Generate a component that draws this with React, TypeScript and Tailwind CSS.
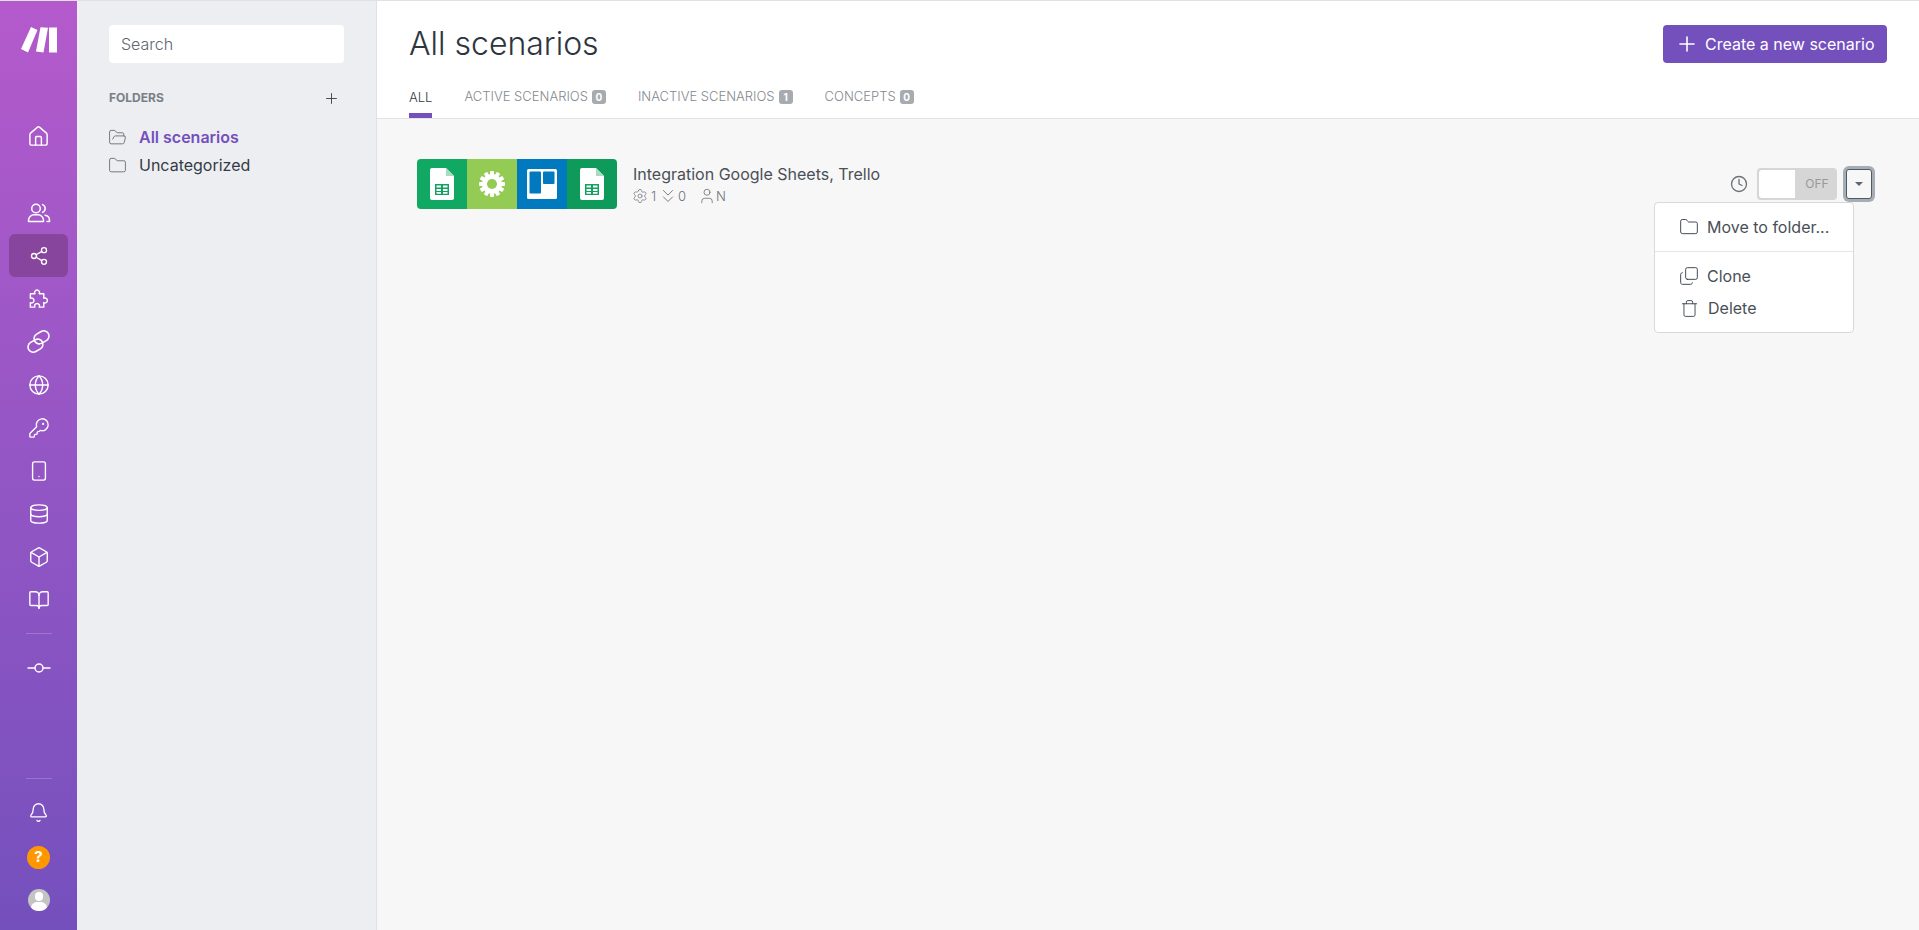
import {
  House,
  Share2,
  Globe,
  KeyRound,
  Smartphone,
  Database,
  Box,
  BookOpen,
  Bell,
  Plus,
  FolderOpen,
  Folder,
  Clock,
  Copy,
  Trash,
  Settings,
  ChevronsDown,
  User,
} from 'lucide-react';

function PeopleIcon() {
  return (
    <svg width="24" height="24" viewBox="0 0 24 24" fill="none" stroke="currentColor" strokeWidth="1.5" strokeLinecap="round" strokeLinejoin="round">
      <circle cx="9" cy="7.5" r="4.3" />
      <path d="M1.5 20.5v-1.2a5.5 5.5 0 0 1 5.5-5.5h4a5.5 5.5 0 0 1 5.5 5.5v1.2z" />
      <path d="M15.5 3.6a4.2 4.2 0 0 1 0 7.8" />
      <path d="M18 14.2a5.2 5.2 0 0 1 4.5 5v1.3h-2.5" />
    </svg>
  );
}

function PuzzleIcon() {
  return (
    <svg width="23" height="23" viewBox="0 0 24 24" fill="none" stroke="currentColor" strokeWidth="1.5" strokeLinejoin="round">
      <path d="M3.5 7h4.7a2.6 2.6 0 1 1 4.6 0h4.7v4.7a2.6 2.6 0 1 1 0 4.6V21h-4.7a2.6 2.6 0 1 0-4.6 0H3.5v-4.7a2.6 2.6 0 1 0 0-4.6z" />
    </svg>
  );
}

function ChainIcon() {
  return (
    <svg width="25" height="25" viewBox="0 0 24 24" fill="none" stroke="currentColor" strokeWidth="1.5">
      <g transform="rotate(-30 12 12)">
        <rect x="0" y="9" width="15" height="10" rx="5" />
        <rect x="9" y="5" width="15" height="10" rx="5" />
      </g>
    </svg>
  );
}

function CommitIcon() {
  return (
    <svg width="24" height="24" viewBox="0 0 24 24" fill="none" stroke="currentColor" strokeWidth="1.5">
      <circle cx="12" cy="12" r="4" />
      <path d="M0.5 12H8M16 12h7.5" />
    </svg>
  );
}

const navTop = [
  { icon: <PeopleIcon /> },
  { icon: <Share2 size={20} strokeWidth={1.6} />, active: true },
  { icon: <PuzzleIcon /> },
  { icon: <ChainIcon /> },
  { icon: <Globe size={22} strokeWidth={1.5} /> },
  { icon: <KeyRound size={22} strokeWidth={1.5} /> },
  { icon: <Smartphone size={22} strokeWidth={1.5} /> },
  { icon: <Database size={22} strokeWidth={1.5} /> },
  { icon: <Box size={22} strokeWidth={1.5} /> },
  { icon: <BookOpen size={22} strokeWidth={1.5} /> },
];

const tabs = [
  { label: 'Active scenarios', count: 0 },
  { label: 'Inactive scenarios', count: 1 },
  { label: 'Concepts', count: 0 },
];

function SheetIcon() {
  return (
    <svg width="24" height="32" viewBox="0 0 24 32">
      <path d="M2 0h14l8 8v22a2 2 0 0 1-2 2H2a2 2 0 0 1-2-2V2a2 2 0 0 1 2-2z" fill="#fff" />
      <path d="M16 0l8 8h-8z" fill="#a8dcc0" />
      <path d="M5 16h14v11H5z" fill="#12a25f" />
      <path d="M6.5 17.5h4.5v2h-4.5zM13 17.5h4.5v2H13zM6.5 21h4.5v2h-4.5zM13 21h4.5v2H13zM6.5 24h4.5v1.8h-4.5zM13 24h4.5v1.8H13z" fill="#fff" />
    </svg>
  );
}

function GearIcon() {
  const teeth = [0, 30, 60, 90, 120, 150];
  return (
    <svg width="26" height="26" viewBox="0 0 26 26">
      {teeth.map((a) => (
        <rect key={a} x="11" y="0" width="4" height="26" rx="0.8" fill="#fff" transform={`rotate(${a} 13 13)`} />
      ))}
      <circle cx="13" cy="13" r="10" fill="#fff" />
      <circle cx="13" cy="13" r="5" fill="#93cb55" />
    </svg>
  );
}

function TrelloIcon() {
  return (
    <svg width="30" height="30" viewBox="0 0 30 30">
      <rect width="30" height="30" rx="1.5" fill="#fff" />
      <rect x="2.5" y="2.5" width="11.5" height="22" rx="1" fill="#0079bf" />
      <rect x="16" y="2.5" width="11.5" height="12.5" rx="1" fill="#0079bf" />
    </svg>
  );
}

export default function App() {
  return (
    <div className="flex h-[930px] w-full overflow-hidden border-t border-[#dfe1e6] bg-[#f7f7f7] font-['Inter',sans-serif] text-[#333b45]">
      <aside className="flex w-[77px] shrink-0 flex-col items-center bg-gradient-to-b from-[#b45acc] to-[#7450bd] text-white">
        <svg className="mt-[26px]" width="36" height="26" viewBox="0 0 36 26" fill="#fff">
          <path d="M10 0l6.5 3L7 25.5 0 22z" />
          <path d="M19.5 0.2l7.5 .6L22.5 25.5l-7.5-1z" />
          <path d="M28 .5h8v25h-8z" />
        </svg>
        <div className="mt-[62px] flex h-[43px] items-center justify-center">
          <House size={23} strokeWidth={1.5} />
        </div>
        <nav className="mt-[33px] flex flex-col items-center">
          {navTop.map(({ icon, active }, i) => (
            <div
              key={i}
              className={`flex h-[43px] w-[59px] items-center justify-center rounded-md ${active ? 'bg-[#87459e]' : ''}`}
            >
              {icon}
            </div>
          ))}
        </nav>
        <div className="mt-3 h-px w-[26px] bg-white/20" />
        <div className="mt-3 flex h-[43px] items-center justify-center">
          <CommitIcon />
        </div>
        <div className="mt-auto h-px w-[26px] bg-white/20" />
        <div className="mt-[21px] flex h-6 items-center justify-center">
          <Bell size={21} strokeWidth={1.5} />
        </div>
        <div className="mt-[22px] flex h-[23px] w-[23px] items-center justify-center rounded-full bg-[#ff9800] text-[15px] font-bold text-white">
          ?
        </div>
        <div className="relative mt-[20px] mb-[19px] h-[22px] w-[22px] overflow-hidden rounded-full bg-[#c4c4c4]">
          <div className="absolute left-[7px] top-[3px] h-[9px] w-[8px] rounded-full bg-white" />
          <div className="absolute left-[3px] top-[13px] h-[12px] w-[16px] rounded-full bg-white" />
        </div>
      </aside>

      <section className="w-[300px] shrink-0 border-r border-[#dfe1e6] bg-[#edeef2] pl-8 pr-[32px] pt-6">
        <div className="flex h-[38px] w-[235px] items-center rounded-[4px] bg-white px-3 text-[16px] font-light text-[#5f6670]">
          Search
        </div>
        <div className="mt-[27px] flex h-4 items-center justify-between pr-[4px]">
          <span className="text-[12px] font-bold leading-4 text-[#7a7f87]">FOLDERS</span>
          <Plus size={17} strokeWidth={1.25} className="text-[#333b45]" />
        </div>
        <div className="mt-[17px] flex h-[28px] items-center text-[16px] font-semibold text-[#7450bd]">
          <FolderOpen size={19} strokeWidth={1} className="-ml-px mr-[12px] text-[#555b66]" />
          All scenarios
        </div>
        <div className="flex h-[28px] items-center text-[16px] text-[#333b45]">
          <Folder size={19} strokeWidth={1} className="-ml-px mr-[12px] text-[#555b66]" />
          Uncategorized
        </div>
      </section>

      <main className="relative min-w-0 flex-1">
        <header className="h-[118px] border-b border-[#e3e3e3] bg-white px-8">
          <div className="flex items-start justify-between">
            <h1 className="mt-[25px] text-[32px] font-light leading-[36px] text-[#2d3540]">All scenarios</h1>
            <button className="mt-6 flex h-[38px] w-[224px] items-center rounded-[4px] bg-[#7450bd] pl-3 text-[16px] text-white">
              <Plus size={24} strokeWidth={1.6} className="mr-[6px]" />
              Create a new scenario
            </button>
          </div>
          <div className="mt-5 flex items-start text-[13px] font-light uppercase">
            <div className="h-[35px] border-b-[5px] border-[#7450bd] leading-[28px] text-[#333b45]">All</div>
            {tabs.map((t) => (
              <div key={t.label} className="ml-8 flex h-[28px] items-center text-[#84898f]">
                {t.label}
                <span className="ml-[4px] flex h-[14px] w-[14px] items-center justify-center rounded-[3px] bg-[#a7abb0] text-[10px] font-bold text-white">
                  {t.count}
                </span>
              </div>
            ))}
          </div>
        </header>

        <div className="mt-[40px] flex items-center pl-10 pr-[47px]">
          <div className="flex h-[50px] w-[200px] overflow-hidden rounded-[4px]">
            <div className="flex flex-1 items-center justify-center bg-[#11a863]">
              <SheetIcon />
            </div>
            <div className="flex flex-1 items-center justify-center bg-[#93cb55]">
              <GearIcon />
            </div>
            <div className="flex flex-1 items-center justify-center bg-[#0079bf]">
              <TrelloIcon />
            </div>
            <div className="flex flex-1 items-center justify-center bg-[#0e9a5a]">
              <SheetIcon />
            </div>
          </div>
          <div className="ml-[16px] pt-[2px]">
            <div className="text-[16px] leading-[20px] text-[#4a4f57]">Integration Google Sheets, Trello</div>
            <div className="mt-[1px] flex items-center text-[13px] font-light leading-[16px] text-[#6d727a]">
              <Settings size={16} strokeWidth={1.1} className="-ml-px" />
              <span className="ml-[3px] w-[6px]">1</span>
              <ChevronsDown size={22} strokeWidth={1} />
              <span className="-ml-px">0</span>
              <User size={18} strokeWidth={1.1} className="ml-[12px]" />
              <span>N</span>
            </div>
          </div>
          <div className="ml-auto flex items-center">
            <Clock size={18} strokeWidth={1.75} className="text-[#6d7278]" />
            <div className="ml-[9px] flex h-[32px] w-[80px] items-center rounded-[4px] bg-[#d6d6d6] p-[2px]">
              <div className="h-full w-[36px] rounded-l-[3px] bg-white" />
              <span className="flex-1 pl-1 text-center text-[12px] text-[#999]">OFF</span>
            </div>
            <div className="ml-[9px] flex h-[30px] w-[26px] items-center justify-center rounded-[3px] border border-[#4e5a66] bg-[#f7f7f7] shadow-[0_0_0_3px_#a6adb4]">
              <div className="h-0 w-0 border-x-[4px] border-t-[4px] border-x-transparent border-t-[#5d6670]" />
            </div>
          </div>
        </div>

        <div className="absolute left-[1277px] top-[201px] h-[131px] w-[200px] rounded-[4px] border border-[#d9d9d9] bg-white text-[16px] text-[#4a4f57]">
          <div className="flex h-[48px] items-center pl-[24px]">
            <Folder size={20} strokeWidth={1.1} className="mr-[8px] text-[#333b45]" />
            Move to folder...
          </div>
          <div className="h-px bg-[#e5e5e5]" />
          <div className="mt-[8px] flex h-[32px] items-center pl-[24px]">
            <Copy size={20} strokeWidth={1.1} className="mr-[8px] -scale-y-100 text-[#333b45]" />
            Clone
          </div>
          <div className="flex h-[32px] items-center pl-[25px]">
            <Trash size={19} strokeWidth={1.1} className="mr-[9px] text-[#333b45]" />
            Delete
          </div>
        </div>
      </main>
    </div>
  );
}
